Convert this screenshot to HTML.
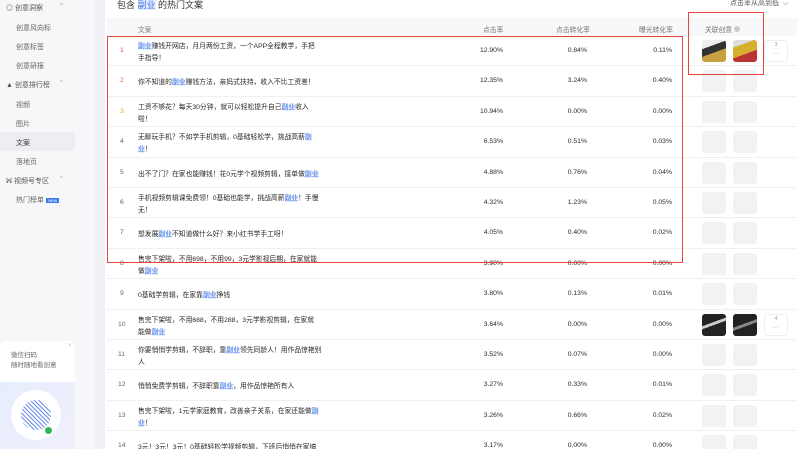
<!DOCTYPE html>
<html><head><meta charset="utf-8"><style>
*{margin:0;padding:0;box-sizing:border-box}
html,body{width:800px;height:449px;overflow:hidden}
body{background:#f0f1f4;font-family:"Liberation Sans","Noto Sans CJK SC",sans-serif;color:#333;position:relative}
.side{position:absolute;left:0;top:0;width:95px;height:449px;background:#f6f7f9;font-size:7px;color:#666}
.si{position:absolute;left:16px}
.sh{position:absolute;left:6px;color:#555}
.car{position:absolute;left:60px;font-size:6px;color:#999}
.main{position:absolute;left:105px;top:0;width:695px;height:449px;background:#fff}
.a{position:absolute;font-size:6.8px;white-space:nowrap;color:#2a2a2a}
.hl{background:#e6efff;color:#3a6fe0}
.row{position:absolute;left:2px;width:690px;border-bottom:1px solid #f0f0f0}
.th{position:absolute;width:24px;height:22px;border-radius:3px;background:#f1f2f4}
</style></head><body>
<div class="side">
<div class="sh" style="top:3px">◎ 创意洞察</div><div class="car" style="top:3px">^</div>
<div class="si" style="top:23px">创意风向标</div>
<div class="si" style="top:42px">创意标签</div>
<div class="si" style="top:61px">创意研报</div>
<div class="sh" style="top:80px">▲ 创意排行榜</div><div class="car" style="top:80px">^</div>
<div class="si" style="top:100px">视频</div>
<div class="si" style="top:119px">图片</div>
<div style="position:absolute;left:0;top:132px;width:75px;height:19px;background:#eceef2;border-radius:0 4px 4px 0"></div>
<div class="si" style="top:138px;color:#333">文案</div>
<div class="si" style="top:157px">落地页</div>
<div class="sh" style="top:176px">ꟽ 视频号专区</div><div class="car" style="top:176px">^</div>
<div class="si" style="top:195px">热门榜单 <span style="background:#3a7af0;color:#fff;font-size:4px;padding:0 2px">NEW</span></div>
<div style="position:absolute;left:0;top:341px;width:75px;height:108px;background:#fff;border-radius:5px"></div>
<div style="position:absolute;left:11px;top:351px;font-size:6.5px;line-height:10px;color:#666">微信扫码<br>随时随地看创意</div>
<div style="position:absolute;left:68px;top:343px;font-size:6px;color:#bbb">×</div>
<div style="position:absolute;left:0;top:382px;width:75px;height:67px;background:linear-gradient(135deg,#e5eefc,#f1eefc)"></div>
<div style="position:absolute;left:11px;top:390px;width:50px;height:50px;border-radius:50%;background:#fff"></div>
<div style="position:absolute;left:21px;top:400px;width:30px;height:30px;border-radius:50%;background:repeating-linear-gradient(45deg,#6d8de8 0 1px,#fff 1px 3px)"></div>
<div style="position:absolute;left:45px;top:427px;width:7px;height:7px;border-radius:50%;background:#2fb457"></div>
</div>
<div class="main">
<div class="a" style="left:12px;top:-2px;font-size:9px;color:#333">包含 <span class="hl">副业</span> 的热门文案</div>
<div class="a" style="left:625px;top:-2px;font-size:7px;color:#555">点击率从高到低 &nbsp;⌵</div>
<div style="position:absolute;left:2px;top:18px;width:690px;height:18px;background:#f7f8fa"></div>
<div class="a" style="left:33px;top:24px;color:#777">文案</div>
<div class="a" style="left:378px;top:24px;color:#777">点击率</div>
<div class="a" style="left:451px;top:24px;color:#777">点击转化率</div>
<div class="a" style="left:534px;top:24px;color:#777">曝光转化率</div>
<div class="a" style="left:600px;top:24px;color:#777">关联创意 <span style="display:inline-block;width:6px;height:6px;border-radius:50%;background:#ccc"></span></div>
<div id="rows"></div>
<div style="position:absolute;left:2px;top:36px;width:576px;height:227px;border:1.5px solid #e8423c"></div>
<div style="position:absolute;left:583px;top:12px;width:76px;height:63px;border:1.5px solid #e8423c"></div>
</div>
<script>
var d=[
["副业赚钱开网店，月月两份工资，一个APP全程教学，手把|手指导！","12.90%","0.84%","0.11%"],
["你不知道的副业赚钱方法，亲妈式扶持，收入不比工资差！","12.35%","3.24%","0.40%"],
["工资不够花？每天30分钟，就可以轻松提升自己副业收入|啦！","10.94%","0.00%","0.00%"],
["无聊玩手机？不如学手机剪辑，0基础轻松学，挑战高薪副|业！","6.53%","0.51%","0.03%"],
["出不了门？在家也能赚钱！花0元学个视频剪辑，接单做副业","4.88%","0.76%","0.04%"],
["手机视频剪辑课免费领！0基础也能学，挑战高薪副业！手慢|无！","4.32%","1.23%","0.05%"],
["想发展副业不知道做什么好？来小红书学手工呀！","4.05%","0.40%","0.02%"],
["售完下架啦，不用698，不用99，3元学影视后期，在家就能|做副业","3.90%","0.00%","0.00%"],
["0基础学剪辑，在家靠副业挣钱","3.80%","0.13%","0.01%"],
["售完下架啦，不用688，不用288，3元学影视剪辑，在家就|能做副业","3.64%","0.00%","0.00%"],
["你要悄悄学剪辑，不辞职，靠副业领先同龄人！用作品惊艳别|人","3.52%","0.07%","0.00%"],
["悄悄免费学剪辑，不辞职靠副业，用作品惊艳所有人","3.27%","0.33%","0.01%"],
["售完下架啦，1元学家庭教育，改善亲子关系，在家还能做副|业！","3.26%","0.66%","0.02%"],
["3元！3元！3元！0基础轻松学视频剪辑，下班后悄悄在家搞","3.17%","0.00%","0.00%"]];
var h='',cols=['#e8423c','#f0703a','#e8b020'];
d.forEach(function(r,i){
var y=36+i*30.4,c=y+15;
var t=r[0].replace(/副业/,'<span class="hl">副业</span>').replace(/副\|业/,'<span class="hl">副</span><br><span class="hl">业</span>').replace('|','<br>');
var two=r[0].indexOf('|')>=0;
h+='<div class="row" style="top:'+y+'px;height:30.4px"></div>';
h+='<div class="a" style="left:'+(i>8?13:15)+'px;top:'+(c-4)+'px;color:'+(cols[i]||'#666')+'">'+(i+1)+'</div>';
h+='<div class="a" style="left:33px;top:'+(c-(two?10:4))+'px;line-height:12px">'+t+'</div>';
h+='<div class="a" style="right:297px;top:'+(c-4)+'px">'+r[1]+'</div>';
h+='<div class="a" style="right:213px;top:'+(c-4)+'px">'+r[2]+'</div>';
h+='<div class="a" style="right:128px;top:'+(c-4)+'px">'+r[3]+'</div>';
var dark=(i==0)?['linear-gradient(160deg,#eee 0 30%,#333 30% 55%,#c9a040 55%)','linear-gradient(160deg,#ddd 0 25%,#d8b030 25% 60%,#b33 60%)']:(i==9?['linear-gradient(160deg,#222 0 40%,#ccc 40% 50%,#222 50%)','linear-gradient(160deg,#222 0 45%,#888 45% 55%,#222 55%)']:null);
h+='<div class="th" style="left:597px;top:'+(c-11)+'px;'+(dark?'background:'+dark[0]:'')+'"></div>';
h+='<div class="th" style="left:628px;top:'+(c-11)+'px;'+(dark?'background:'+dark[1]:'')+'"></div>';
if(dark)h+='<div class="th" style="left:659px;top:'+(c-11)+'px;background:#fff;border:1px solid #eee;font-size:5px;color:#999;text-align:center;line-height:9px">'+(i==0?3:4)+'<br>···</div>';
});
document.getElementById('rows').innerHTML=h;
</script>
</body></html>
